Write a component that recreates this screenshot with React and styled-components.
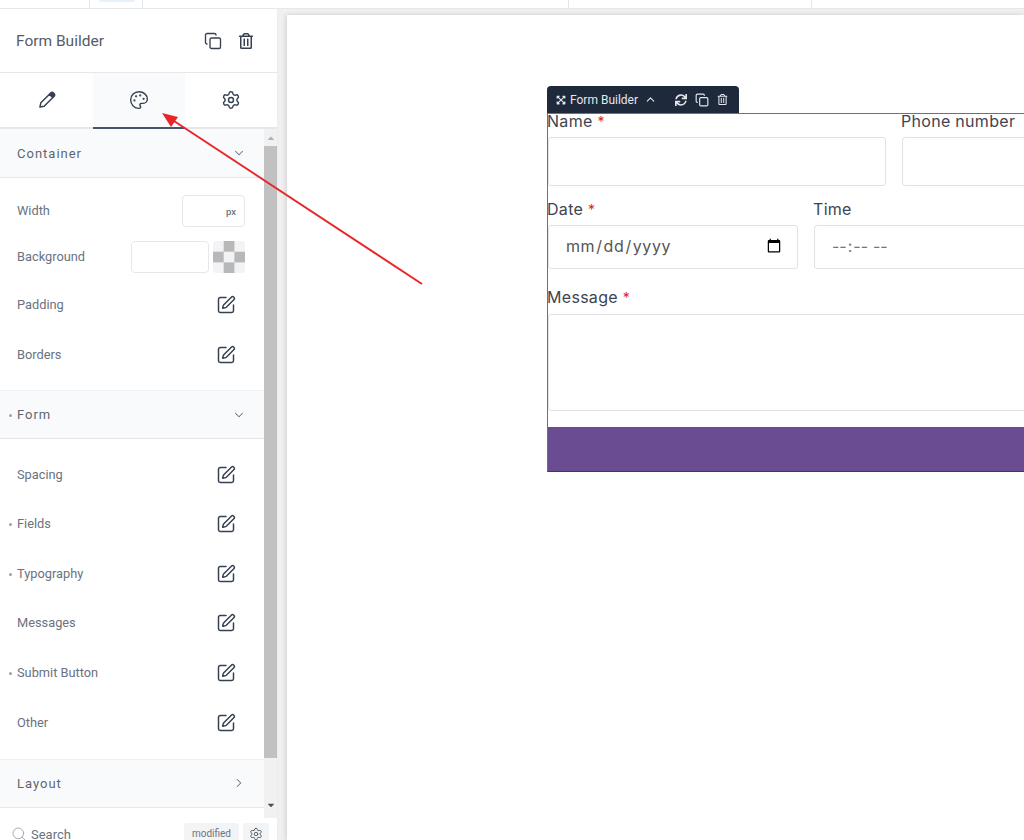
import React from 'react'
import styled, { createGlobalStyle } from 'styled-components'
import { Palette, Settings, Copy, SquarePen, ChevronDown, ChevronRight, ChevronUp, Search } from 'lucide-react'
import { FaSync, FaRegTrashAlt, FaCaretUp, FaCaretDown, FaExpandArrowsAlt } from 'react-icons/fa'

const Global = createGlobalStyle`
  html, body { margin: 0; padding: 0; height: 840px; overflow: hidden; background: #fff; }
  * { box-sizing: border-box; }
  body { font-family: Roboto, "Liberation Sans", sans-serif; }
`

const Page = styled.div`
  position: relative;
  width: 1024px;
  height: 840px;
  overflow: hidden;
  display: flex;
  flex-direction: column;
`
const TopBar = styled.div`
  height: 9px;
  flex: none;
  display: flex;
  background: #fff;
  border-bottom: 1px solid #e5e7eb;
`
const TopCell = styled.div`
  width: ${p => p.$w}px;
  flex: none;
  height: 8px;
  border-right: ${p => (p.$line ? '1px solid #e5e7eb' : 'none')};
`
const TopTab = styled(TopCell)`
  padding: 0 7px 0 9px;
  &::before {
    content: '';
    display: block;
    width: 36px;
    height: 2px;
    background: #e6f1fb;
    border-radius: 0 0 3px 3px;
  }
`
const Main = styled.div`
  flex: 1;
  display: flex;
  min-height: 0;
`
const Sidebar = styled.aside`
  width: 278px;
  flex: none;
  background: #fff;
  display: flex;
  flex-direction: column;
  border-right: 1px solid #ececec;
`
const Header = styled.div`
  height: 64px;
  flex: none;
  padding: 0 23px 0 16px;
  display: flex;
  align-items: center;
  justify-content: space-between;
  border-bottom: 1px solid #e5e7eb;
`
const Title = styled.div`
  font-size: 15.5px;
  color: #555c68;
`
const HeaderIcons = styled.div`
  display: flex;
  gap: 16px;
  color: #374151;
  align-items: center;
`
const Tabs = styled.div`
  height: 56px;
  flex: none;
  display: grid;
  grid-template-columns: 93px 92px 92px;
`
const Tab = styled.div`
  display: flex;
  align-items: center;
  justify-content: center;
  color: #374151;
  background: ${p => (p.$active ? '#f8fafc' : '#fff')};
  border-bottom: 2px solid ${p => (p.$active ? '#475569' : '#e5e7eb')};
`
const ScrollArea = styled.div`
  flex: 1;
  display: flex;
  min-height: 0;
`
const Panel = styled.div`
  width: 264px;
  flex: none;
  display: flex;
  flex-direction: column;
`
const SectionHead = styled.div`
  height: 49px;
  flex: none;
  display: flex;
  align-items: center;
  justify-content: space-between;
  padding: 0 18px 0 17px;
  position: relative;
  background: #f8fafc;
  border-bottom: 1px solid #e5e7eb;
  border-top: ${p => (p.$top ? '1px solid #eef0f3' : 'none')};
  font-size: 13px;
  font-weight: 400;
  letter-spacing: 1px;
  color: #5f6672;
  svg { color: #64748b; }
`
const Dot = styled.span`
  position: absolute;
  left: 9px;
  top: 50%;
  width: 3px;
  height: 3px;
  margin-top: -1px;
  border-radius: 50%;
  background: #9ca3af;
`
const Rows = styled.div`
  display: flex;
  flex-direction: column;
  padding: ${p => p.$pad};
`
const Row = styled.div`
  height: ${p => p.$h || 49.6}px;
  flex: none;
  position: relative;
  display: flex;
  align-items: center;
  justify-content: space-between;
  padding: 0 28px 0 17px;
  font-size: 12.8px;
  color: #6b7280;
  svg { color: #374151; }
`
const RowLabel = styled.span`
  margin-top: -1px;
`
const RowControls = styled.div`
  display: flex;
  gap: 4px;
  margin-right: -9px;
`
const UnitBox = styled.div`
  width: 63px;
  height: 32px;
  border: 1px solid #e5e7eb;
  border-radius: 4px;
  display: flex;
  align-items: center;
  justify-content: flex-end;
  padding-right: 8px;
  font-size: 9.5px;
  font-weight: 500;
  color: #6b7280;
`
const ColorBox = styled.div`
  width: 78px;
  height: 32px;
  border: 1px solid #e5e7eb;
  border-radius: 4px;
`
const Checker = styled.div`
  width: 32px;
  height: 32px;
  border-radius: 3px;
  overflow: hidden;
  background: repeating-conic-gradient(#b8b8b8 0 25%, #f1f3f5 0 50%) 0 0 / 21.4px 21.4px;
`
const ScrollBar = styled.div`
  width: 13px;
  flex: none;
  background: #f1f1f1;
  display: flex;
  flex-direction: column;
  align-items: center;
`
const ScrollEnd = styled.div`
  height: 17px;
  flex: none;
  display: flex;
  align-items: center;
  justify-content: center;
  font-size: 10px;
  color: ${p => p.$color};
`
const Thumb = styled.div`
  flex: 1;
  width: 100%;
  background: #c1c1c1;
  margin-bottom: 38px;
`
const ScrollFoot = styled(ScrollEnd)`
  margin-bottom: 5px;
`
const Footer = styled.div`
  height: 28px;
  flex: none;
  display: flex;
  align-items: flex-start;
  padding: 11px 8px 0 11px;
  font-size: 13px;
  margin-top: -6px;
  overflow: hidden;
`
const SearchLabel = styled.div`
  flex: 1;
  display: flex;
  align-items: center;
  gap: 4px;
  margin-top: 3px;
  color: #6b7280;
  font-size: 13px;
`
const Chip = styled.div`
  height: 28px;
  padding: 5px 8px 0;
  border-radius: 3px 3px 0 0;
  background: #f3f4f6;
  color: #6b7280;
  font-size: 10px;
  display: flex;
  align-items: flex-start;
`
const GearChip = styled(Chip)`
  margin-left: 4px;
  padding: 4px 6px 0;
  color: #4b5563;
`
const Gutter = styled.div`
  flex: 1;
  min-width: 0;
  background: #f0f0f0;
  padding: 6px 0 0 9px;
`
const Canvas = styled.div`
  height: 100%;
  background: #fff;
  box-shadow: -1px 0 5px rgba(0, 0, 0, 0.14);
  padding: 98px 0 0 260px;
  overflow: hidden;
`
const Widget = styled.div`
  position: relative;
  width: 800px;
  height: 359px;
  border-top: 1px solid #64748b;
  border-left: 1px solid #64748b;
  border-bottom: 1px solid #334155;
  font-family: Inter, sans-serif;
  color: #3f4450;
`
const Toolbar = styled.div`
  position: absolute;
  left: -1px;
  top: -28px;
  width: 192px;
  height: 27px;
  background: #1e293b;
  border-radius: 4px 4px 0 0;
  display: flex;
  align-items: center;
  padding: 0 10px 0 9px;
  color: #e5e7eb;
  font-family: Roboto, sans-serif;
  font-size: 12px;
`
const ToolbarName = styled.span`
  margin: 0 6px 0 4px;
`
const ToolbarIcons = styled.div`
  display: flex;
  align-items: center;
  gap: 8px;
  margin-left: 18px;
`
const FormRow = styled.div`
  display: grid;
  grid-template-columns: ${p => p.$cols};
  gap: 16px;
`
const Field = styled.div`
  display: flex;
  flex-direction: column;
`
const Label = styled.label`
  font-size: 16px;
  letter-spacing: 0.3px;
  line-height: 14px;
  height: ${p => p.$h}px;
  white-space: nowrap;
  margin: ${p => p.$mt || 0}px 0 0 -1px;
`
const Star = styled.span`
  color: #dc2626;
  font-size: 14px;
`
const Input = styled.input`
  display: block;
  width: 100%;
  height: ${p => p.$h}px;
  border: 1px solid #dfe2e6;
  border-radius: 3px;
  background: #fff;
  padding: 0 13px 2px 16px;
  font-family: Inter, sans-serif;
  font-size: 16px;
  letter-spacing: ${p => p.$track || '0.6px'};
  color: ${p => p.$color || '#555'};
  outline: none;
`
const TextArea = styled.div`
  height: 97px;
  border: 1px solid #dfe2e6;
  border-radius: 3px;
  width: 100%;
`
const Submit = styled.div`
  margin-top: 16px;
  height: 44px;
  background: #6a4c93;
`
const ArrowLayer = styled.svg`
  position: absolute;
  left: 0;
  top: 0;
  pointer-events: none;
`

const PenIcon = () => (
  <svg width="20" height="20" viewBox="0 0 24 24" fill="none" stroke="currentColor" strokeWidth="1.8" strokeLinejoin="round">
    <path d="M3.5 20.5 L4.6 15.4 L15 5 L19 9 L8.6 19.4 Z" />
    <path d="M15 5 L16.6 3.4 a2.1 2.1 0 0 1 3 0 l1 1 a2.1 2.1 0 0 1 0 3 L19 9 Z" fill="currentColor" />
  </svg>
)

const controls = [
  { label: 'Padding', h: 50 },
  { label: 'Borders', h: 49 },
]
const formRows = [
  { label: 'Spacing' },
  { label: 'Fields', dot: true },
  { label: 'Typography', dot: true },
  { label: 'Messages' },
  { label: 'Submit Button', dot: true },
  { label: 'Other' },
]

const App = () => {
  return (
    <Page>
      <Global />
      <TopBar>
        <TopCell $w={90} $line />
        <TopTab $w={53} $line />
        <TopCell $w={426} $line />
        <TopCell $w={243} $line />
      </TopBar>
      <Main>
        <Sidebar>
          <Header>
            <Title>Form Builder</Title>
            <HeaderIcons>
              <Copy size={18} strokeWidth={1.8} />
              <FaRegTrashAlt size={16} />
            </HeaderIcons>
          </Header>
          <Tabs>
            <Tab><PenIcon /></Tab>
            <Tab $active><Palette size={20} strokeWidth={1.7} /></Tab>
            <Tab><Settings size={20} strokeWidth={1.7} /></Tab>
          </Tabs>
          <ScrollArea>
            <Panel>
              <SectionHead>Container<ChevronDown size={14} strokeWidth={1.8} /></SectionHead>
              <Rows $pad="10px 0 11px">
                <Row $h={46}>
                  <RowLabel>Width</RowLabel>
                  <RowControls><UnitBox>px</UnitBox></RowControls>
                </Row>
                <Row $h={46}>
                  <RowLabel>Background</RowLabel>
                  <RowControls><ColorBox /><Checker /></RowControls>
                </Row>
                {controls.map(c => (
                  <Row key={c.label} $h={c.h}>
                    <RowLabel>{c.label}</RowLabel>
                    <SquarePen size={20} strokeWidth={1.8} />
                  </Row>
                ))}
              </Rows>
              <SectionHead $top><Dot />Form<ChevronDown size={14} strokeWidth={1.8} /></SectionHead>
              <Rows $pad="10.85px 0 11.15px">
                {formRows.map(r => (
                  <Row key={r.label}>
                    {r.dot && <Dot />}
                    <RowLabel>{r.label}</RowLabel>
                    <SquarePen size={20} strokeWidth={1.8} />
                  </Row>
                ))}
              </Rows>
              <SectionHead $top>Layout<ChevronRight size={14} strokeWidth={1.8} /></SectionHead>
            </Panel>
            <ScrollBar>
              <ScrollEnd $color="#b0b0b0"><FaCaretUp /></ScrollEnd>
              <Thumb />
              <ScrollFoot $color="#505050"><FaCaretDown /></ScrollFoot>
            </ScrollBar>
          </ScrollArea>
          <Footer>
            <SearchLabel><Search size={16} strokeWidth={1.4} color="#9ca3af" />Search</SearchLabel>
            <Chip>modified</Chip>
            <GearChip><Settings size={14} strokeWidth={1.6} /></GearChip>
          </Footer>
        </Sidebar>
        <Gutter>
          <Canvas>
            <Widget>
              <Toolbar>
                <FaExpandArrowsAlt size={10} />
                <ToolbarName>Form Builder</ToolbarName>
                <ChevronUp size={13} />
                <ToolbarIcons>
                  <FaSync size={12} />
                  <Copy size={14} />
                  <FaRegTrashAlt size={11} />
                </ToolbarIcons>
              </Toolbar>
              <FormRow $cols="338px 338px">
                <Field>
                  <Label $h={23}>Name <Star>*</Star></Label>
                  <Input $h={49} />
                </Field>
                <Field>
                  <Label $h={23}>Phone number</Label>
                  <Input $h={49} />
                </Field>
              </FormRow>
              <FormRow $cols="250px 250px">
                <Field>
                  <Label $h={23} $mt={16}>Date <Star>*</Star></Label>
                  <Input type="date" $h={44} />
                </Field>
                <Field>
                  <Label $h={23} $mt={16}>Time</Label>
                  <Input type="time" $h={44} $color="#777" $track="1.2px" />
                </Field>
              </FormRow>
              <Field>
                <Label $h={24} $mt={21}>Message <Star>*</Star></Label>
                <TextArea />
              </Field>
              <Submit />
            </Widget>
          </Canvas>
        </Gutter>
      </Main>
      <ArrowLayer width="1024" height="840" viewBox="0 0 1024 840">
        <line x1="422" y1="284" x2="174" y2="121" stroke="#e8262a" strokeWidth="2" />
        <polygon points="162,113 178,117 171,127" fill="#e8262a" />
      </ArrowLayer>
    </Page>
  )
}

export default App
